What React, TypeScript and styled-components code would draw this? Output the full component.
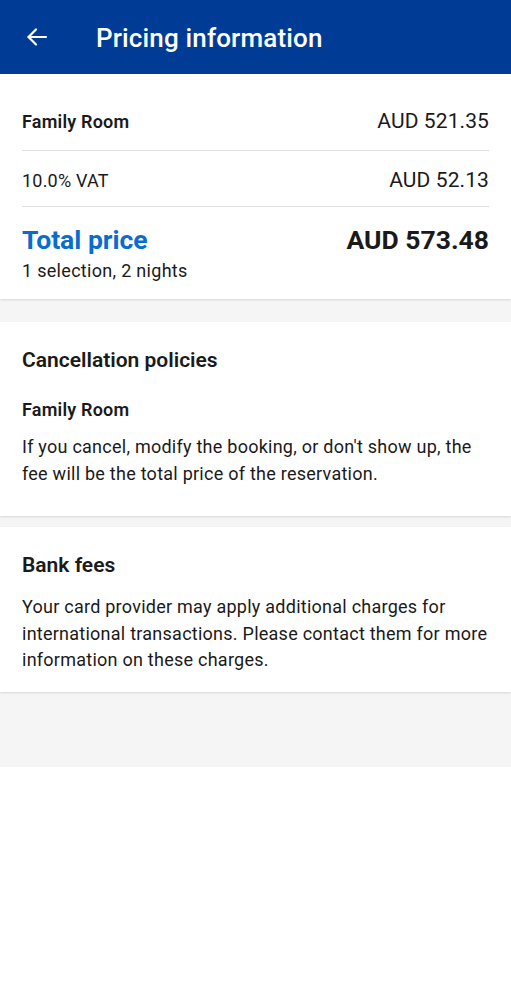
import styled, { createGlobalStyle } from 'styled-components'

const GlobalStyle = createGlobalStyle`
  body {
    margin: 0;
    background: #ffffff;
    font-family: Roboto, "Noto Sans", sans-serif;
    color: #1a1a1a;
  }
`

const Page = styled.div`
  width: 511px;
`

const Header = styled.header`
  height: 74px;
  background-color: #003c95;
  display: flex;
  align-items: center;
  padding: 0 0 0 24px;
  box-sizing: border-box;
  color: white;
`

const BackButton = styled.button`
  background: none;
  border: none;
  padding: 0;
  width: 26px;
  height: 26px;
  display: flex;
  align-items: center;
  justify-content: center;
  cursor: pointer;
  margin-right: 46px;
`

const HeaderTitle = styled.h1`
  margin: 0 0 -2px;
  font-size: 26px;
  font-weight: 500;
  letter-spacing: 0.15px;
`

const Body = styled.div`
  background-color: #f5f5f5;
  padding-bottom: 75px;
  display: flex;
  flex-direction: column;
`

const Card = styled.section<{ gapAfter?: number }>`
  background: white;
  padding: 0 22px;
  margin-bottom: ${p => p.gapAfter ?? 0}px;
  box-shadow: 0 1px 2px rgba(0, 0, 0, 0.12);
`

const PriceRow = styled.div<{ pt: number; pb: number }>`
  display: flex;
  justify-content: space-between;
  align-items: baseline;
  line-height: 24px;
  padding: ${p => p.pt}px 0 ${p => p.pb}px;
  border-bottom: 1px solid #e0e0e0;
`

const Label = styled.span<{ bold?: boolean }>`
  font-size: 18px;
  font-weight: ${p => (p.bold ? 600 : 400)};
  letter-spacing: 0.2px;
  color: #1a1a1a;
`

const Amount = styled.span`
  font-size: 21px;
  letter-spacing: 0.1px;
  color: #1a1a1a;
`

const TotalBlock = styled.div`
  display: flex;
  justify-content: space-between;
  align-items: flex-start;
  padding: 17px 0 17px;
`

const TotalLabel = styled.div`
  font-size: 26.5px;
  font-weight: 700;
  color: #0a6ccf;
  line-height: 32px;
`

const TotalSub = styled.div`
  font-size: 18px;
  letter-spacing: 0.3px;
  line-height: 22px;
  color: #1a1a1a;
  margin-top: 4px;
`

const TotalAmount = styled.div`
  font-size: 26.5px;
  font-weight: 700;
  color: #1a1a1a;
  line-height: 32px;
`

const SectionTitle = styled.h2`
  margin: 0;
  font-size: 21px;
  font-weight: 600;
  line-height: 28px;
`

const SubTitle = styled.h3`
  margin: 0;
  font-size: 18px;
  font-weight: 600;
  letter-spacing: 0.2px;
  line-height: 24px;
`

const Paragraph = styled.p`
  margin: 0;
  font-size: 18px;
  letter-spacing: 0.25px;
  line-height: 26.5px;
  color: #1a1a1a;
`

const Stack = styled.div<{ pt: number; pb: number }>`
  display: flex;
  flex-direction: column;
  padding: ${p => p.pt}px 0 ${p => p.pb}px;
`

const Spacer = styled.div<{ h: number }>`
  height: ${p => p.h}px;
`

function App() {
  return (
    <Page>
      <GlobalStyle />
      <Header>
        <BackButton aria-label="Back">
          <svg width="24" height="24" viewBox="0 0 24 24" fill="none" stroke="white" strokeWidth="2.2" strokeLinecap="round" strokeLinejoin="round">
            <path d="M21 12H3.5" />
            <path d="M11 4.5L3.5 12L11 19.5" />
          </svg>
        </BackButton>
        <HeaderTitle>Pricing information</HeaderTitle>
      </Header>
      <Body>
        <Card gapAfter={23}>
          <PriceRow pt={35} pb={16}>
            <Label bold>Family Room</Label>
            <Amount>AUD 521.35</Amount>
          </PriceRow>
          <PriceRow pt={17} pb={13}>
            <Label>10.0% VAT</Label>
            <Amount>AUD 52.13</Amount>
          </PriceRow>
          <TotalBlock>
            <div>
              <TotalLabel>Total price</TotalLabel>
              <TotalSub>1 selection, 2 nights</TotalSub>
            </div>
            <TotalAmount>AUD 573.48</TotalAmount>
          </TotalBlock>
        </Card>
        <Card gapAfter={11}>
          <Stack pt={24} pb={29}>
            <SectionTitle>Cancellation policies</SectionTitle>
            <Spacer h={24} />
            <SubTitle>Family Room</SubTitle>
            <Spacer h={12} />
            <Paragraph>
              If you cancel, modify the booking, or don't show up, the fee will be the total price of the reservation.
            </Paragraph>
          </Stack>
        </Card>
        <Card>
          <Stack pt={24} pb={18}>
            <SectionTitle>Bank fees</SectionTitle>
            <Spacer h={15} />
            <Paragraph>
              Your card provider may apply additional charges for international transactions. Please contact them for more information on these charges.
            </Paragraph>
          </Stack>
        </Card>
      </Body>
    </Page>
  )
}

export default App
